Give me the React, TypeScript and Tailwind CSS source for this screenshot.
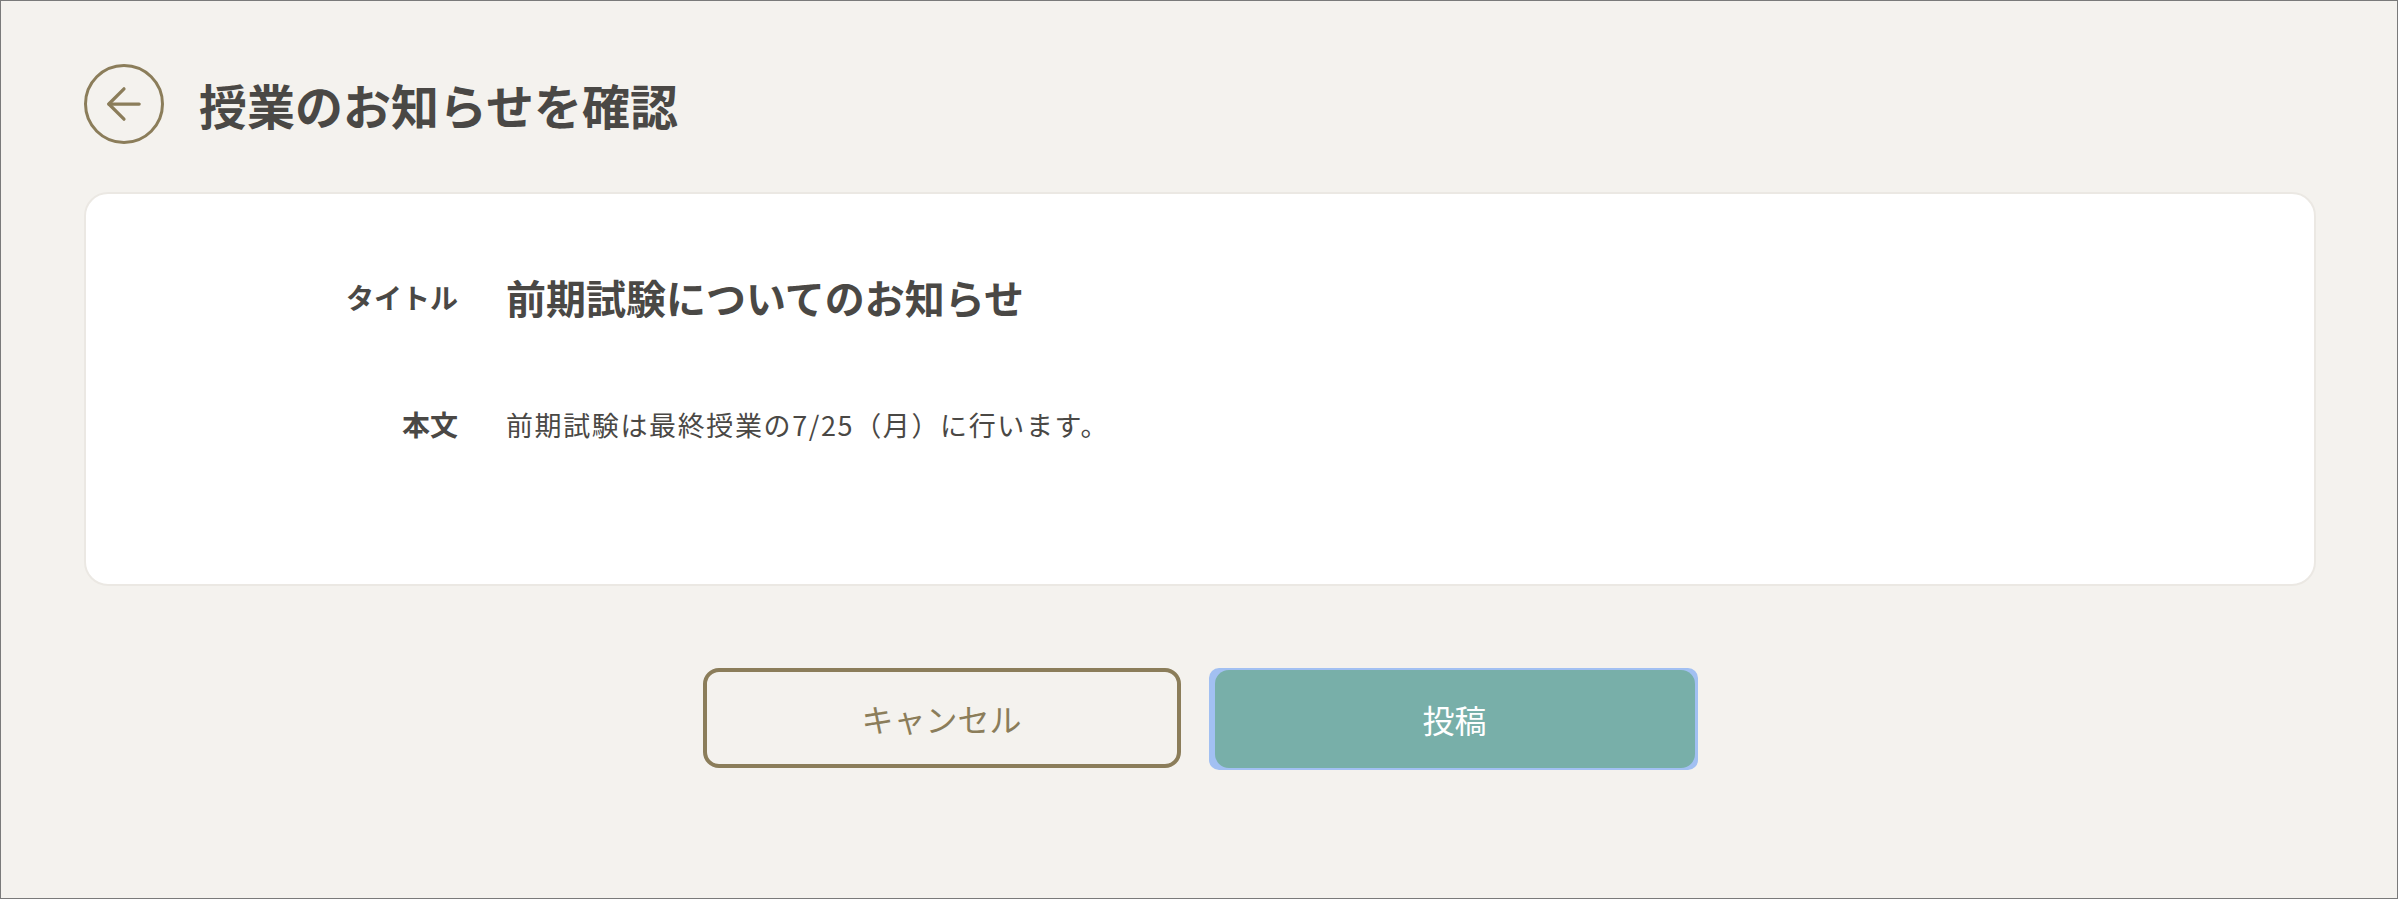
import { ArrowLeft } from "lucide-react";

const font = {
  fontFamily: '"Noto Sans CJK JP", "Noto Sans", sans-serif',
};

const NoticeConfirm = () => {
  return (
    <div
      className="flex h-screen w-full flex-col border border-[#7a7a7a] bg-[#f4f2ee] pt-[63px] pr-[81px] pl-[83px] text-[#4a4845]"
      style={font}
    >
      <div className="flex items-center gap-[35px]">
        <button className="flex h-[80px] w-[80px] items-center justify-center rounded-full border-[3px] border-[#8b7d5a] text-[#8b7d5a]">
          <ArrowLeft className="h-[52px] w-[52px]" strokeWidth={1.5} />
        </button>
        <h1 className="text-[48px] leading-none font-bold">授業のお知らせを確認</h1>
      </div>

      <div className="mt-[48px] flex h-[394px] flex-col gap-[76px] rounded-[24px] border-2 border-[#ebe8e3] bg-white pt-[73px] pl-[148px]">
        <div className="flex items-center gap-[48px]">
          <p className="w-[224px] text-right text-[28px] font-bold">タイトル</p>
          <p className="text-[40px] leading-[60px] font-bold">前期試験についてのお知らせ</p>
        </div>
        <div className="flex items-center gap-[48px]">
          <p className="w-[224px] text-right text-[28px] font-bold">本文</p>
          <p className="text-[27px] leading-[39px] tracking-[0.06em]">
            前期試験は最終授業の7/25（月）に行います。
          </p>
        </div>
      </div>

      <div className="mt-[82px] flex justify-center gap-[28px]">
        <button className="h-[100px] w-[478px] rounded-[16px] border-4 border-[#8b7d5a] bg-[#f4f2ee] text-[32px] text-[#8b7d5a]">
          キャンセル
        </button>
        <div className="rounded-[10px] bg-[#a2c0f2] py-[2px] pr-[3px] pl-[6px]">
          <button className="h-[98px] w-[480px] rounded-[14px] bg-[#78afa9] text-[32px] text-white">
            投稿
          </button>
        </div>
      </div>
    </div>
  );
};

export default NoticeConfirm;
